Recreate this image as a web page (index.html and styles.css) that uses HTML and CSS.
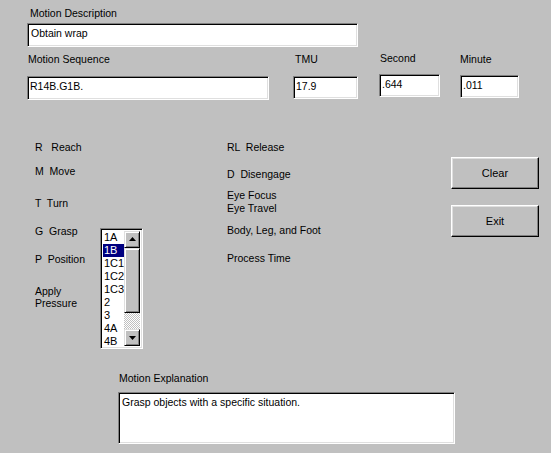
FILE: index.html
```html
<!DOCTYPE html>
<html>
<head>
<meta charset="utf-8">
<title>Motion</title>
<link rel="stylesheet" href="styles.css">
</head>
<body>
<div class="window">
  <section class="desc">
    <div class="label">Motion Description</div>
    <div class="field field-desc">Obtain wrap</div>
  </section>

  <section class="params">
    <div class="param param-seq">
      <div class="label">Motion Sequence</div>
      <div class="field">R14B.G1B.</div>
    </div>
    <div class="param param-tmu">
      <div class="label">TMU</div>
      <div class="field">17.9</div>
    </div>
    <div class="param param-sec">
      <div class="label">Second</div>
      <div class="field">.644</div>
    </div>
    <div class="param param-min">
      <div class="label">Minute</div>
      <div class="field">.011</div>
    </div>
  </section>

  <section class="middle">
    <div class="codes">
      <div class="code c-reach">R   Reach</div>
      <div class="code c-move">M  Move</div>
      <div class="code c-turn">T  Turn</div>
      <div class="code c-grasp">G  Grasp</div>
      <div class="code c-pos">P  Position</div>
      <div class="code c-apply">Apply<br>Pressure</div>
    </div>

    <div class="listbox">
      <ul class="items">
        <li>1A</li>
        <li class="selected">1B</li>
        <li>1C1</li>
        <li>1C2</li>
        <li>1C3</li>
        <li>2</li>
        <li>3</li>
        <li>4A</li>
        <li>4B</li>
      </ul>
      <div class="scrollbar">
        <div class="sb-btn"><svg width="7" height="4" viewBox="0 0 7 4"><polygon points="3.5,0 7,4 0,4" fill="#000"/></svg></div>
        <div class="sb-thumb"></div>
        <div class="sb-track"></div>
        <div class="sb-btn"><svg width="7" height="4" viewBox="0 0 7 4"><polygon points="0,0 7,0 3.5,4" fill="#000"/></svg></div>
      </div>
    </div>

    <div class="codes codes-right">
      <div class="code r-release">RL  Release</div>
      <div class="code r-dis">D  Disengage</div>
      <div class="code r-eye">Eye Focus<br>Eye Travel</div>
      <div class="code r-body">Body, Leg, and Foot</div>
      <div class="code r-proc">Process Time</div>
    </div>

    <div class="buttons">
      <div class="button">Clear</div>
      <div class="button">Exit</div>
    </div>
  </section>

  <section class="explain">
    <div class="label">Motion Explanation</div>
    <div class="field field-area">Grasp objects with a specific situation.</div>
  </section>
</div>
</body>
</html>
```

FILE: styles.css
```css
* { box-sizing: border-box; }

html, body {
  margin: 0;
  padding: 0;
  background: #c0c0c0;
}

body {
  font-family: "Liberation Sans", Arial, sans-serif;
  font-size: 10.5px;
  line-height: 13px;
  color: #000;
  width: 551px;
  height: 453px;
  overflow: hidden;
}

.label {
  height: 13px;
  white-space: nowrap;
}

.field {
  background: #fff;
  border: 1px solid;
  border-color: #808080 #fff #fff #808080;
  box-shadow: inset 1px 1px 0 #000, inset -1px -1px 0 #dfdfdf;
  padding: 3px 2px 0 2px;
  height: 23px;
  white-space: nowrap;
  overflow: hidden;
}

/* Row 1 */
.desc {
  padding: 7px 0 0 27px;
}
.desc .label { margin: 0 0 3px 3px; }
.field-desc { width: 331px; height: 24px; padding-left: 3px; }

/* Row 2 */
.params {
  display: flex;
  align-items: flex-start;
  padding-left: 27px;
}
.param-seq { width: 242px; margin-top: 6px; }
.param-seq .label { margin: 0 0 10px 1px; }
.param-seq .field { height: 24px; }

.param-tmu { width: 65px; margin: 6px 0 0 24px; }
.param-tmu .label { margin: 0 0 10px 2px; }

.param-sec { width: 61px; margin: 5px 0 0 21px; }
.param-sec .label { margin: 0 0 9px 1px; }

.param-min { width: 59px; margin: 6px 0 0 20px; }
.param-min .label { margin: 0 0 9px 0; }

/* Middle */
.middle {
  display: flex;
  align-items: flex-start;
  margin-top: 41px;
  padding-left: 35px;
  height: 209px;
}

.codes {
  width: 65px;
  display: flex;
  flex-direction: column;
}
.code { white-space: pre; }
.c-move { margin-top: 11px; }
.c-turn { margin-top: 19px; }
.c-grasp { margin-top: 15px; }
.c-pos { margin-top: 15px; }
.c-apply { margin-top: 19px; line-height: 12px; }

.codes-right {
  width: 224px;
  margin-left: 84px;
}
.r-dis { margin-top: 14px; }
.r-eye { margin-top: 8px; }
.r-body { margin-top: 9px; }
.r-proc { margin-top: 15px; }

/* Listbox */
.listbox {
  margin-top: 87px;
  width: 43px;
  height: 121px;
  background: #fff;
  border: 1px solid;
  border-color: #808080 #fff #fff #808080;
  box-shadow: inset 1px 1px 0 #000, inset -1px -1px 0 #dfdfdf;
  padding: 2px;
  display: flex;
}
.items {
  list-style: none;
  margin: 0;
  padding: 0;
  width: 22px;
  font-size: 11px;
}
.items li {
  height: 13px;
  line-height: 13px;
  padding-left: 1px;
}
.items li.selected {
  background: #000080;
  color: #fff;
}
.scrollbar {
  width: 17px;
  display: flex;
  flex-direction: column;
}
.sb-btn, .sb-thumb {
  background: #c0c0c0;
  border: 1px solid;
  border-color: #dfdfdf #000 #000 #dfdfdf;
  box-shadow: inset 1px 1px 0 #fff, inset -1px -1px 0 #808080;
}
.sb-btn {
  height: 17px;
  display: flex;
  align-items: center;
  justify-content: center;
}
.sb-btn svg { display: block; }
.sb-thumb { height: 66px; }
.sb-track {
  height: 17px;
  background: repeating-conic-gradient(#c0c0c0 0 25%, #fff 0 50%) 0 0 / 2px 2px;
}

/* Buttons */
.buttons {
  display: flex;
  flex-direction: column;
  gap: 16px;
  margin-top: 16px;
}
.button {
  width: 88px;
  height: 32px;
  background: #c0c0c0;
  border: 1px solid;
  border-color: #fff #000 #000 #fff;
  box-shadow: inset -1px -1px 0 #808080, inset 1px 1px 0 #dfdfdf;
  display: flex;
  align-items: center;
  justify-content: center;
  font-size: 11px;
}

/* Explanation */
.explain {
  padding-left: 118px;
  margin-top: 22px;
}
.explain .label { margin: 0 0 7px 1px; }
.field-area {
  width: 337px;
  height: 52px;
  padding: 3px 3px 0 3px;
}
```
